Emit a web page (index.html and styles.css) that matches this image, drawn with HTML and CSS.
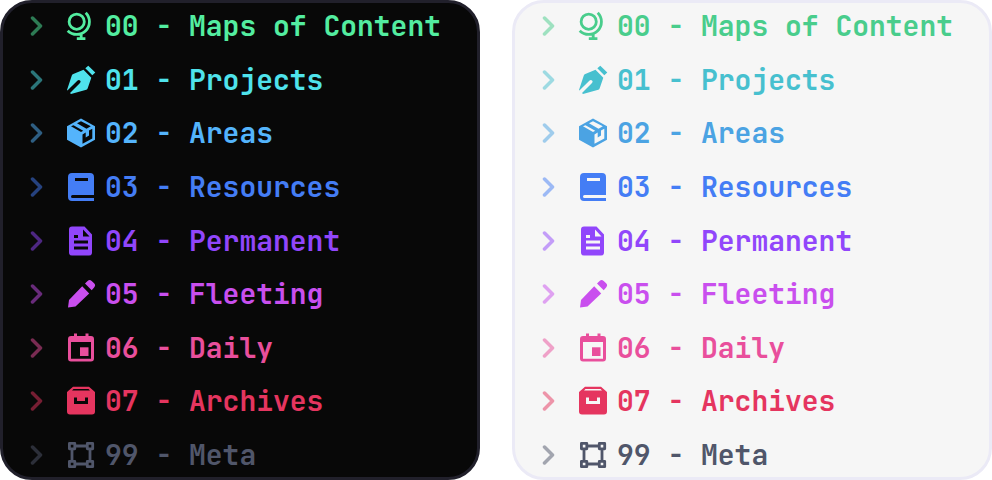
FILE: index.html
```
<!DOCTYPE html>
<html lang="en">
<head>
<meta charset="utf-8">
<meta name="viewport" content="width=device-width, initial-scale=1">
<title>Vault folders</title>
<link rel="stylesheet" href="styles.css">
</head>
<body>
<svg class="sprite" aria-hidden="true">
  <symbol id="chevron" viewBox="0 0 14 22"><path d="M2.500 3 10.500 11l-8 8" fill="none" stroke="currentColor" stroke-width="3.500" stroke-linecap="round" stroke-linejoin="round"/></symbol>
  <symbol id="globe" viewBox="0 0 30 30"><g fill="none" stroke="currentColor" stroke-width="2.800"><circle cx="10.700" cy="10.700" r="7.600"/><path d="M19.700 1.700A12.700 12.700 0 0 1 1.700 19.700M15.200 22.500v5M10.800 27.700h8.600"/></g></symbol>
  <symbol id="pen" viewBox="0 0 30 30"><path fill="currentColor" d="M22.300.700l7 6.700-3 2.800-7-6.900zM17.500 4.700l7.800 8-3.600 10.600q-.4 1.100-1.400 1.400L5 29l-1-1 10-10a1.700 1.700 0 1 0-2.400-2.400L1.400 25.500l-.4-.4L5.800 10.500q.4-1.200 1.500-1.500z"/></symbol>
  <symbol id="package" viewBox="0 0 30 30"><path fill="currentColor" fill-rule="evenodd" d="M15 .5 29 8.200v13.600l-14 7.700-14-7.700V8.200zM5 8.300l10 5.700 2.200-1.300-9.700-5.500zM11 5.200l9.500 5.500 4.300-2.400L15 3.300zM16.500 16.500v9.300l9.800-5.300v-9.700l-3.300 1.800v5l-3.300 1.800v-5z"/></symbol>
  <symbol id="book" viewBox="0 0 30 30"><path fill="currentColor" fill-rule="evenodd" d="M6 1h18a4 4 0 0 1 4 4v18H6.500q-1.500 0-1.500 1.500T6.500 26H28v3H6a4 4 0 0 1-4-4V5a4 4 0 0 1 4-4zM9 6v3h13V6z"/></symbol>
  <symbol id="file" viewBox="0 0 30 30"><path fill="currentColor" fill-rule="evenodd" d="M6 .5h12.500L26 8.500v18a3 3 0 0 1-3 3H6a3 3 0 0 1-3-3v-23a3 3 0 0 1 3-3zM17 3.500V10.500h6.500zM8 9v3h4V9zM8 14.500v3h14v-3zM8 20.500v3h14v-3z"/></symbol>
  <symbol id="pencil" viewBox="0 0 30 30"><path fill="currentColor" d="M16.200 7.200l7 7.200L9.500 27.500 2 28.500l1-7.500zM19 4.500l2.600-2.600q2-2 4.100 0l2.400 2.400q2 2 0 4.100L25.700 11.300z"/></symbol>
  <symbol id="calendar" viewBox="0 0 30 30"><path fill="currentColor" fill-rule="evenodd" d="M8 .5h3V3h8.500V.5h3V3H25a3 3 0 0 1 3 3v19.500a3 3 0 0 1-3 3H5a3 3 0 0 1-3-3V6a3 3 0 0 1 3-3h3zM5 9v16.700h20V9z"/><path fill="currentColor" d="M14 14.300h8.500V23H14z"/></symbol>
  <symbol id="archive" viewBox="0 0 30 30"><path fill="currentColor" fill-rule="evenodd" d="M7 .7h16L29 6v19.500a3 3 0 0 1-3 3H4a3 3 0 0 1-3-3V6zM7.500 3 6 4.500h18L22.500 3zM8 11.500v6.500h14v-6.500h-3V15h-8v-3.500z"/></symbol>
  <symbol id="shape" viewBox="0 0 30 30"><g fill="none" stroke="currentColor" stroke-width="2.800"><path d="M3.400 3.400h5.400v5.400H3.400zM21.300 3.400h5.400v5.400h-5.400zM3.400 21.300h5.400v5.400H3.400zM21.300 21.300h5.400v5.400h-5.400zM8.800 6h12.500M8.800 24h12.500M6 8.800v12.500M24 8.800v12.500" stroke-linejoin="round"/></g></symbol>
</svg>
<main class="previews">
  <ul class="panel dark">
    <li class="row c0"><svg class="chevron"><use href="#chevron"/></svg><svg class="icon"><use href="#globe"/></svg><span>00 - Maps of Content</span></li>
    <li class="row c1"><svg class="chevron"><use href="#chevron"/></svg><svg class="icon"><use href="#pen"/></svg><span>01 - Projects</span></li>
    <li class="row c2"><svg class="chevron"><use href="#chevron"/></svg><svg class="icon"><use href="#package"/></svg><span>02 - Areas</span></li>
    <li class="row c3"><svg class="chevron"><use href="#chevron"/></svg><svg class="icon"><use href="#book"/></svg><span>03 - Resources</span></li>
    <li class="row c4"><svg class="chevron"><use href="#chevron"/></svg><svg class="icon"><use href="#file"/></svg><span>04 - Permanent</span></li>
    <li class="row c5"><svg class="chevron"><use href="#chevron"/></svg><svg class="icon"><use href="#pencil"/></svg><span>05 - Fleeting</span></li>
    <li class="row c6"><svg class="chevron"><use href="#chevron"/></svg><svg class="icon"><use href="#calendar"/></svg><span>06 - Daily</span></li>
    <li class="row c7"><svg class="chevron"><use href="#chevron"/></svg><svg class="icon"><use href="#archive"/></svg><span>07 - Archives</span></li>
    <li class="row c8"><svg class="chevron"><use href="#chevron"/></svg><svg class="icon"><use href="#shape"/></svg><span>99 - Meta</span></li>
  </ul>
  <ul class="panel light">
    <li class="row c0"><svg class="chevron"><use href="#chevron"/></svg><svg class="icon"><use href="#globe"/></svg><span>00 - Maps of Content</span></li>
    <li class="row c1"><svg class="chevron"><use href="#chevron"/></svg><svg class="icon"><use href="#pen"/></svg><span>01 - Projects</span></li>
    <li class="row c2"><svg class="chevron"><use href="#chevron"/></svg><svg class="icon"><use href="#package"/></svg><span>02 - Areas</span></li>
    <li class="row c3"><svg class="chevron"><use href="#chevron"/></svg><svg class="icon"><use href="#book"/></svg><span>03 - Resources</span></li>
    <li class="row c4"><svg class="chevron"><use href="#chevron"/></svg><svg class="icon"><use href="#file"/></svg><span>04 - Permanent</span></li>
    <li class="row c5"><svg class="chevron"><use href="#chevron"/></svg><svg class="icon"><use href="#pencil"/></svg><span>05 - Fleeting</span></li>
    <li class="row c6"><svg class="chevron"><use href="#chevron"/></svg><svg class="icon"><use href="#calendar"/></svg><span>06 - Daily</span></li>
    <li class="row c7"><svg class="chevron"><use href="#chevron"/></svg><svg class="icon"><use href="#archive"/></svg><span>07 - Archives</span></li>
    <li class="row c8"><svg class="chevron"><use href="#chevron"/></svg><svg class="icon"><use href="#shape"/></svg><span>99 - Meta</span></li>
  </ul>
</main>
</body>
</html>
```
FILE: styles.css
```
* { box-sizing: border-box; }
body { margin: 0; background: #fff; }
.sprite { display: none; }
.previews {
  display: grid;
  grid-template-columns: 1fr 1fr;
  gap: 32px;
  min-height: 100vh;
}
.panel {
  display: flex;
  flex-direction: column;
  justify-content: space-between;
  margin: 0;
  padding: 4px 24px 3px 27px;
  list-style: none;
  border: 3px solid;
  border-radius: 32px;
}
.row {
  display: flex;
  align-items: center;
  color: var(--c);
  font: 600 28px/38px "JetBrains Mono", "DejaVu Sans Mono", monospace;
  white-space: nowrap;
}
.chevron { width: 14px; height: 22px; margin-right: 22px; opacity: 0.5; }
.icon { width: 30px; height: 30px; margin-right: 9px; }
.dark { background: #080808; border-color: #21202b; }
.light { background: #f6f6f6; border-color: #ebeaf6; }
.c3 { --c: #447df5; }
.c4 { --c: #9146fb; }
.c5 { --c: #c94fee; }
.c6 { --c: #e94f9c; }
.c7 { --c: #e5355f; }
.c8 { --c: #50566a; }
.dark .c0 { --c: #53eda0; }
.dark .c1 { --c: #4fe3ec; }
.dark .c2 { --c: #54b4fc; }
.light .c0 { --c: #49cd8c; }
.light .c1 { --c: #47c0cf; }
.light .c2 { --c: #4ba3e3; }
```
